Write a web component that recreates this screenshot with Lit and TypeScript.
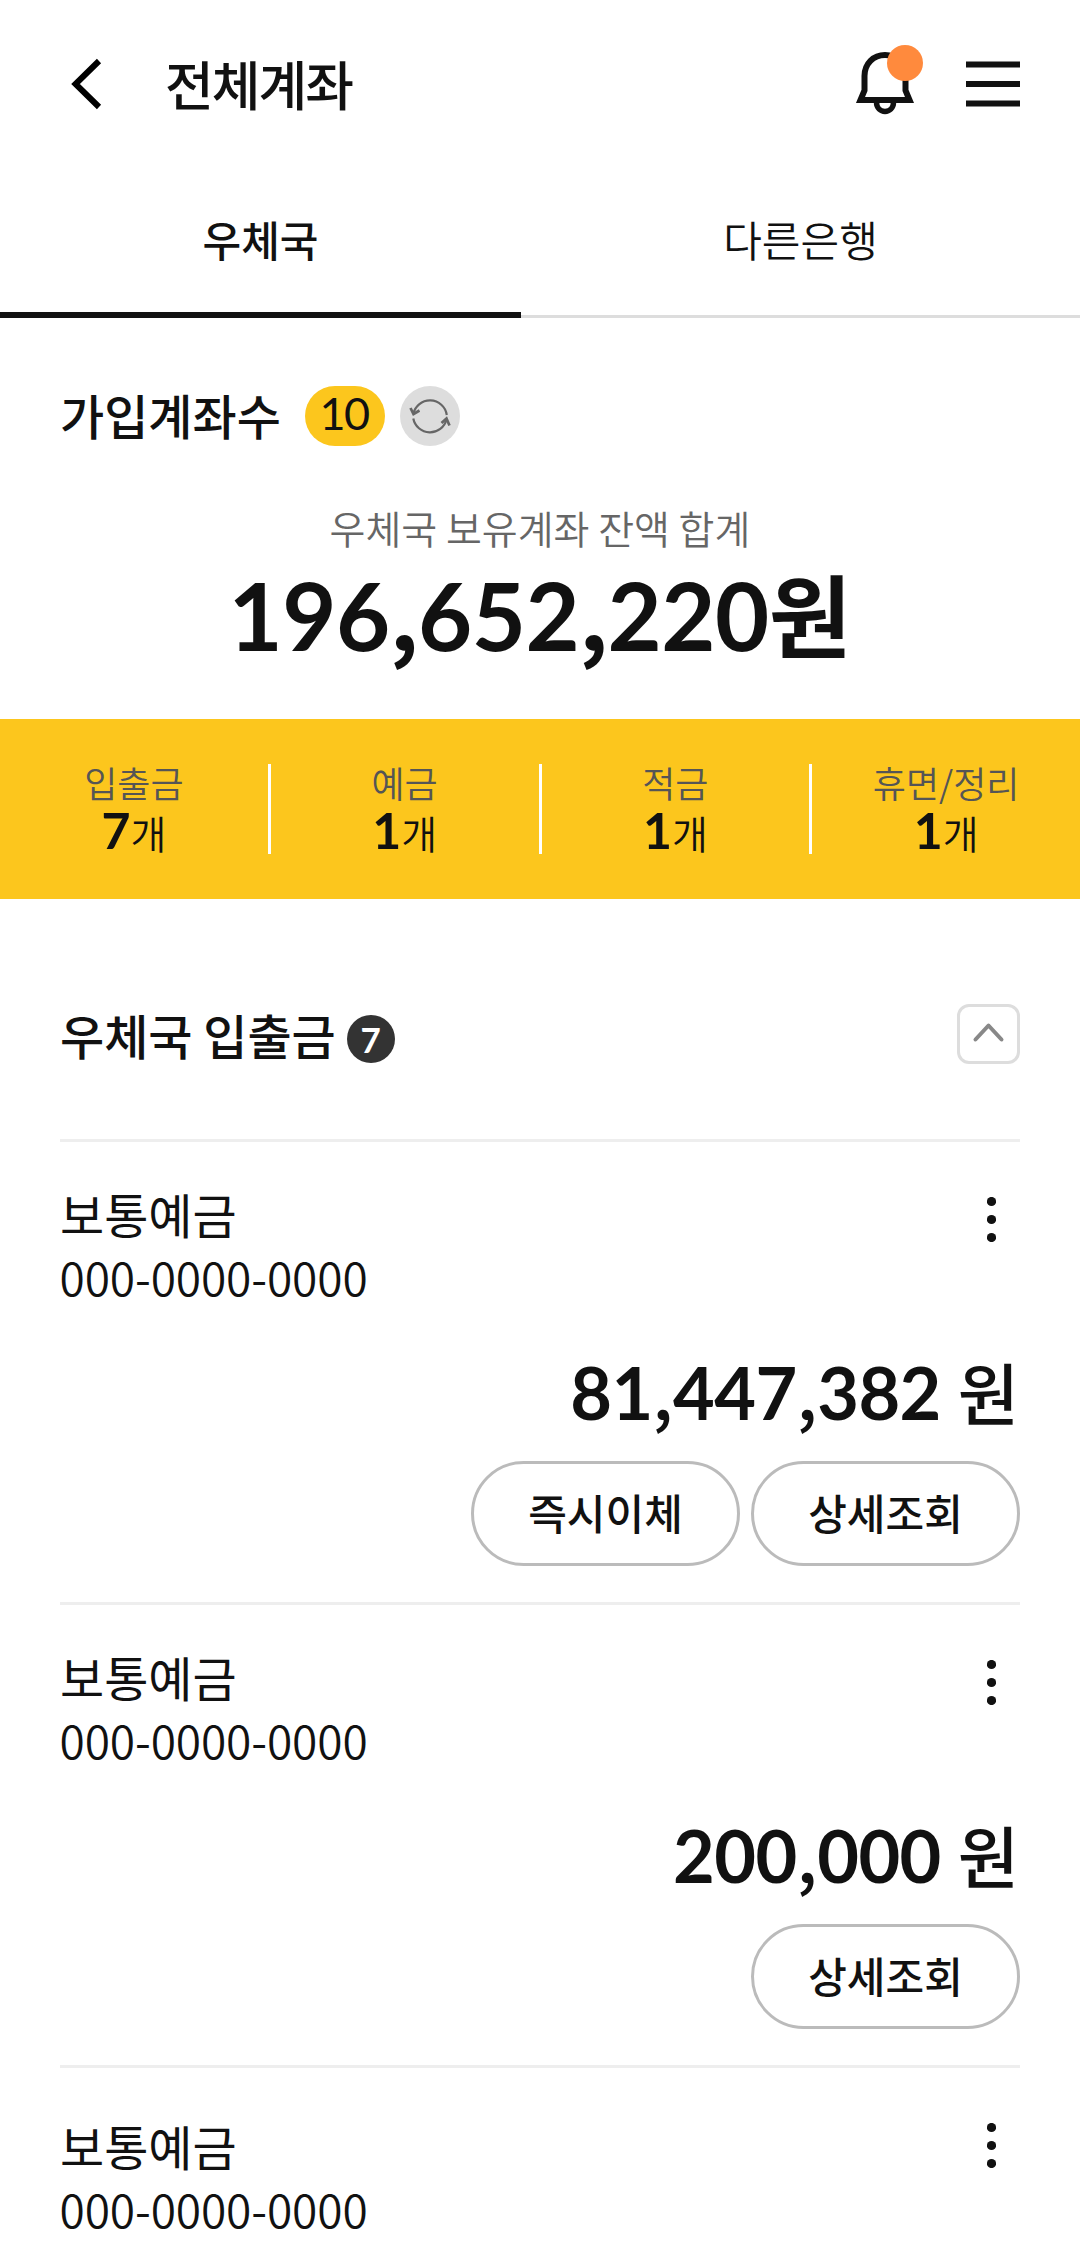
import { LitElement, html, css, nothing } from "lit";
import { customElement, property } from "lit/decorators.js";

interface Account {
  name: string;
  number: string;
  balance: string;
  actions: string[];
}

const SUMMARY = [
  { label: "입출금", count: 7 },
  { label: "예금", count: 1 },
  { label: "적금", count: 1 },
  { label: "휴면/정리", count: 1 },
];

const ACCOUNTS: Account[] = [
  { name: "보통예금", number: "000-0000-0000", balance: "81,447,382", actions: ["즉시이체", "상세조회"] },
  { name: "보통예금", number: "000-0000-0000", balance: "200,000", actions: ["상세조회"] },
  { name: "보통예금", number: "000-0000-0000", balance: "", actions: [] },
];

/** Splits an amount so that its separators can take the Korean face. */
const figure = (amount: string) =>
  amount.split(",").map((part, i) => html`${i ? html`<span class="comma">,</span>` : nothing}${part}`);

@customElement("app-header")
export class AppHeader extends LitElement {
  static styles = css`
    :host { display: block; }
    .bar { display: flex; align-items: center; height: 168px; padding: 0 60px 0 66px; box-sizing: border-box; }
    .title {
      flex: 1; margin: 0 0 0 57px; padding-bottom: 2px;
      font-size: 53px; line-height: 80px; font-weight: 500; letter-spacing: -2px;
    }
    svg { display: block; }
    .bell { margin-right: 42px; }
  `;
  render() {
    return html`
      <header class="bar">
        <svg width="42" height="60" viewBox="0 0 42 60" fill="none" stroke="#000" stroke-width="6">
          <path d="M33 7 L9.500 30 L33 53" />
        </svg>
        <h1 class="title">전체계좌</h1>
        <svg class="bell" width="78" height="84" viewBox="0 0 78 84" fill="none" stroke="#111" stroke-width="6">
          <path d="M14.500 58 L18.500 48.500 V34 C18.500 21.500 27.500 13 39 13 C50.500 13 59.500 21.500 59.500 34 V48.500 L63.500 58 Z" />
          <path d="M30.500 60 C30.500 72.500 47.500 72.500 47.500 60" stroke-width="5.500" />
          <circle cx="59" cy="21" r="18" fill="#ff8a3d" stroke="none" />
        </svg>
        <svg width="54" height="48" viewBox="0 0 54 48" stroke="#111" stroke-width="6.200">
          <path d="M0 4.500 H54 M0 24 H54 M0 43.500 H54" />
        </svg>
      </header>
    `;
  }
}

@customElement("bank-tabs")
export class BankTabs extends LitElement {
  static styles = css`
    :host { display: block; }
    .tabs { display: flex; height: 150px; }
    .tab {
      flex: 0 0 559px; box-sizing: border-box; border-bottom: 3px solid #ddd;
      text-align: center; font-size: 42px; font-weight: 350; line-height: 60px; padding-top: 41px;
    }
    .active { flex-basis: 521px; font-weight: 500; border-bottom: 6px solid #111; }
  `;
  render() {
    return html`
      <nav class="tabs">
        <div class="tab active">우체국</div>
        <div class="tab">다른은행</div>
      </nav>
    `;
  }
}

@customElement("balance-overview")
export class BalanceOverview extends LitElement {
  static styles = css`
    :host { display: block; }
    .heading { display: flex; align-items: center; height: 60px; padding: 68px 60px 0; }
    .label { padding-bottom: 4px; font-size: 48px; line-height: 56px; font-weight: 500; }
    .pill {
      width: 80px; height: 60px; margin-left: 24px; border-radius: 30px; background: #fcc61d;
      font: 400 45px/54px Lato, sans-serif; letter-spacing: -1.500px; text-indent: -1.500px; text-align: center;
    }
    .refresh { display: block; margin-left: 15px; }
    .caption { margin-top: 54px; text-align: center; font-size: 39px; line-height: 54px; font-weight: 350; color: #666; }
    .total {
      height: 112px; margin-top: 2px; text-align: center; white-space: nowrap;
      font-size: 90px; line-height: 112px; font-weight: 700;
    }
    .figure { font-family: Lato, sans-serif; font-size: 93.5px; line-height: 0; letter-spacing: -0.550px; }
    .comma {
      display: inline-block; width: 28.500px; text-align: center; letter-spacing: 0;
      font-family: "Noto Sans CJK KR", sans-serif; font-size: 90px;
    }
    .summary { display: flex; align-items: center; height: 180px; margin-top: 51px; background: #fcc61d; }
    .cell { flex: 1; text-align: center; padding-top: 1px; }
    .rule { width: 3px; height: 90px; background: #fff; }
    .kind { font-size: 36px; line-height: 42px; font-weight: 350; color: #555; }
    .count { display: flex; justify-content: center; align-items: baseline; height: 55px; }
    .num { font: 700 50px/55px Lato, sans-serif; }
    .piece { font-size: 39px; line-height: 55px; font-weight: 350; }
  `;
  render() {
    return html`
      <section>
        <div class="heading">
          <span class="label">가입계좌수</span>
          <span class="pill">10</span>
          <svg class="refresh" width="60" height="60" viewBox="0 0 60 60" fill="none" stroke="#666" stroke-width="2.200">
            <circle cx="30" cy="30" r="30" fill="#ddd" stroke="none" />
            <path d="M13.300 28 A17 17 0 0 1 46.800 29 M13.300 32.500 A17 17 0 0 0 46.500 33.500" />
            <path d="M10.500 22 L13.500 28 L19.500 24.500 M41.500 37 L46.500 32.500 L49.500 39.500" stroke-width="2.700" />
          </svg>
        </div>
        <div class="caption">우체국 보유계좌 잔액 합계</div>
        <div class="total"><span class="figure">${figure("196,652,220")}</span>원</div>
        <div class="summary">
          ${SUMMARY.map(
            (s, i) => html`
              ${i ? html`<span class="rule"></span>` : nothing}
              <div class="cell">
                <div class="kind">${s.label}</div>
                <div class="count"><span class="num">${s.count}</span><span class="piece">개</span></div>
              </div>
            `
          )}
        </div>
      </section>
    `;
  }
}

@customElement("account-item")
export class AccountItem extends LitElement {
  @property({ attribute: false }) account!: Account;
  @property({ type: Boolean, reflect: true }) last = false;

  static styles = css`
    :host { display: block; border-top: 3px solid #eee; height: 460px; }
    :host([last]) { height: 199px; overflow: hidden; }
    .top { display: flex; justify-content: space-between; padding-top: 39px; }
    :host([last]) .text { padding-top: 6px; }
    .name { font-size: 48px; line-height: 64px; font-weight: 400; }
    .number { font-size: 46px; line-height: 62px; font-weight: 350; letter-spacing: -0.100px; text-indent: -0.500px; }
    .more { display: block; margin: 16px 24px 0 0; }
    .balance {
      height: 90px; margin-top: 39px; text-align: right; white-space: nowrap;
      font-size: 66px; line-height: 90px; font-weight: 500;
    }
    .figure { font-family: Lato, sans-serif; font-size: 72px; line-height: 0; font-weight: 700; letter-spacing: -0.560px; }
    .comma {
      display: inline-block; width: 20.500px; text-align: center; letter-spacing: 0;
      font-family: "Noto Sans CJK KR", sans-serif; font-size: 69px; font-weight: 500;
    }
    .unit { margin: 0 1px 0 17px; font-size: 66.500px; line-height: 0; }
    .actions { display: flex; justify-content: flex-end; gap: 11px; margin-top: 25px; }
    .action {
      width: 269px; height: 105px; box-sizing: border-box; border: 3px solid #bbb; border-radius: 53px;
      background: #fff; color: #111; padding: 0 0 4px; margin: 0;
      font-family: inherit; font-size: 42px; line-height: 95px; font-weight: 500; text-align: center;
    }
  `;
  render() {
    const a = this.account;
    return html`
      <div class="top">
        <div class="text">
          <div class="name">${a.name}</div>
          <div class="number">${a.number}</div>
        </div>
        <svg class="more" width="9" height="45" viewBox="0 0 9 45" fill="#111">
          <circle cx="4.500" cy="4.500" r="4.600" /><circle cx="4.500" cy="22.500" r="4.600" /><circle cx="4.500" cy="40.500" r="4.600" />
        </svg>
      </div>
      ${a.balance
        ? html`
            <div class="balance"><span class="figure">${figure(a.balance)}</span><span class="unit">원</span></div>
            <div class="actions">${a.actions.map((t) => html`<button class="action">${t}</button>`)}</div>
          `
        : nothing}
    `;
  }
}

@customElement("app-root")
export class AppRoot extends LitElement {
  static styles = css`
    :host {
      display: block; height: 2267px; overflow: hidden; background: #fff; color: #111;
      font-family: "Noto Sans CJK KR", sans-serif;
    }
    .accounts { padding: 105px 60px 0; }
    .group { display: flex; align-items: center; height: 60px; margin-bottom: 75px; }
    .group-title { margin: 0; font-size: 48px; line-height: 64px; font-weight: 500; }
    .badge {
      width: 48px; height: 48px; margin: 10px auto 0 11px; border-radius: 50%; background: #333; color: #fff;
      font: 700 35px/48px Lato, sans-serif; text-align: center;
    }
    .toggle { display: block; }
  `;
  render() {
    return html`
      <app-header></app-header>
      <bank-tabs></bank-tabs>
      <balance-overview></balance-overview>
      <section class="accounts">
        <div class="group">
          <h2 class="group-title">우체국 입출금</h2>
          <span class="badge">7</span>
          <svg class="toggle" width="63" height="60" viewBox="0 0 63 60" fill="none">
            <rect x="1.500" y="1.500" width="60" height="57" rx="10.500" stroke="#ddd" stroke-width="3" />
            <path d="M18.500 35.500 L31.500 21.500 L44.500 35.500" stroke="#888" stroke-width="4" stroke-linecap="round" stroke-linejoin="round" />
          </svg>
        </div>
        ${ACCOUNTS.map(
          (a, i) => html`<account-item .account=${a} ?last=${i === ACCOUNTS.length - 1}></account-item>`
        )}
      </section>
    `;
  }
}
